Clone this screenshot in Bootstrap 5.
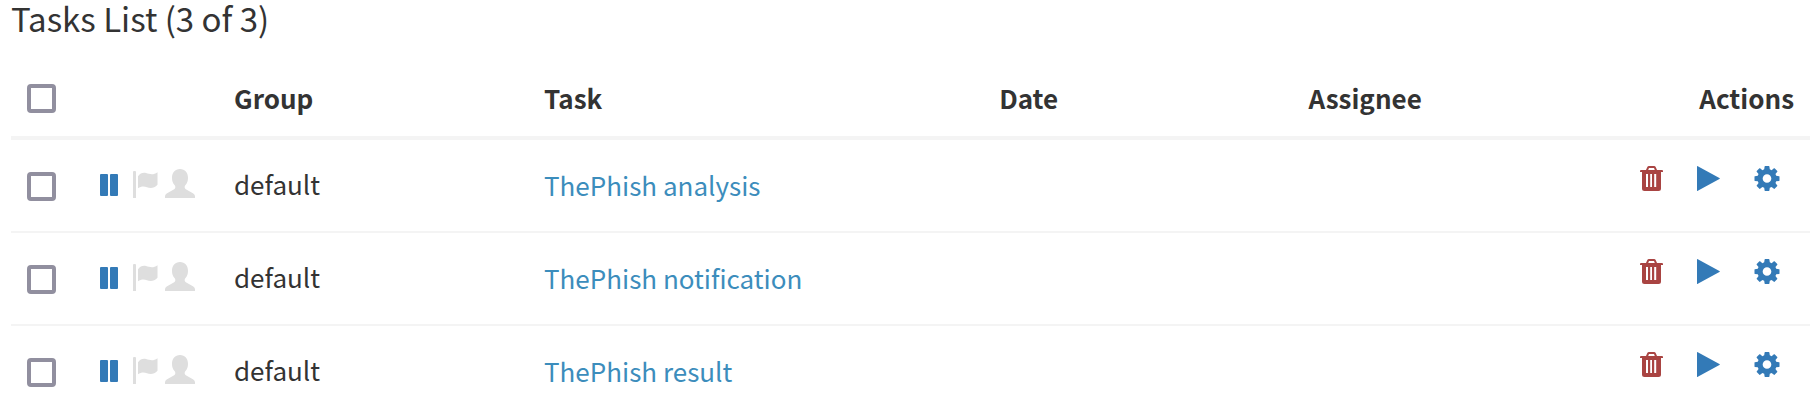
<!DOCTYPE html>
<html lang="en">
<head>
<meta charset="utf-8">
<meta name="viewport" content="width=device-width, initial-scale=1">
<title>Tasks List</title>
<link href="https://cdn.jsdelivr.net/npm/bootstrap@5.3.0/dist/css/bootstrap.min.css" rel="stylesheet">
<style>
  body { font-family: "Noto Sans CJK SC", "Source Sans Pro", sans-serif; font-size: 26px; line-height: 40px; color: #333; background: #fff; }
  .list-title { font-size: 33px; line-height: 36px; font-weight: 400; margin: 0 0 24px; }
  .task-panel { padding: 0 10px 0 11px; }
  .task-table { table-layout: fixed; border-collapse: separate; border-spacing: 0; color: #333; margin: 0; }
  .task-table > thead > tr > th { padding: 18px 16px; border-bottom: 4px solid #f4f4f4; font-weight: 700; vertical-align: top; }
  .task-table > tbody > tr > td { padding: 24px 16px 27px; border: 0; vertical-align: top; color: inherit; }
  .task-table > tbody > tr + tr > td { border-top: 2px solid #f4f4f4; }
  .task-table > tbody > tr:last-child > td { padding-bottom: 16px; }
  .col-check { width: 73px; }
  .col-state { width: 134px; }
  .col-group { width: 310px; }
  .col-task { width: 25.3%; }
  .col-date { width: 17.2%; }
  .task-check.form-check-input { display: block; width: 29px; height: 29px; margin: 8px 0 0; border: 4px solid #918f9f; border-radius: 4px; }
  th .task-check.form-check-input { margin-top: 6px; }
  .state-icons { margin-top: 5px; height: 29px; color: #dedede; }
  .state-icons svg, .task-actions svg { display: block; fill: currentColor; }
  .state-icons .icon-state { margin: 0 15px 2px 0; }
  .state-icons .icon-flag { margin-right: 7px; }
  .tone-blue { color: #337ab7; }
  .tone-red { color: #a94442; }
  .task-link { display: block; padding-top: 1px; margin-bottom: -1px; color: #3c8dbc; text-decoration: none; }
  .task-actions { gap: 34px; margin: 2px 14px 0 0; }
  .task-actions .btn { --bs-btn-padding-x: 0; --bs-btn-padding-y: 0; --bs-btn-border-width: 0; line-height: 1; border-radius: 0; }
</style>
</head>
<body>
<svg class="d-none" xmlns="http://www.w3.org/2000/svg">
  <symbol id="i-pause" viewBox="0 0 18 22"><rect width="8" height="22" rx="1"/><rect x="10" width="8" height="22" rx="1"/></symbol>
  <symbol id="i-flag" viewBox="0 0 25 27"><path d="M0 1q0-1 1-1h1q1 0 1 1v26H0zM5 5.200C7 2.500 10 1.300 13 2.100c4 1.200 7.500 2.200 11.500-.9v12.600c-3 3.400-7 3.900-10.500 2.500-3-1.200-6-1-9 .9z"/></symbol>
  <symbol id="i-user" viewBox="0 0 30 29"><path d="M15 0c5 0 8 3.500 8 9 0 3-1 5.500-2.500 7-.6.700-.8 1.200-.8 2.200 0 1.100.5 1.700 1.500 2.200l6.300 3.600c1.700 1 2.500 2 2.500 3.400V29H0v-1.600c0-1.400.8-2.400 2.500-3.400l6.300-3.600c1-.5 1.500-1.100 1.500-2.200 0-1-.2-1.500-.8-2.200C8 14.500 7 12 7 9c0-5.500 3-9 8-9z"/></symbol>
  <symbol id="i-trash" viewBox="0 0 23 25"><path fill-rule="evenodd" d="M6 4 7.200 1.200Q7.700 0 9 0h5q1.300 0 1.800 1.200L17 4h5q1 0 1 1v1h-2v16.500q0 2.500-2.500 2.500h-14Q2 25 2 22.500V6H0V5q0-1 1-1zm2.200 0h6.600l-.8-2H9zM6 8v13h2V8zm4.200 0v13H12V8zm4 0v13h2V8z"/></symbol>
  <symbol id="i-play" viewBox="0 0 23 25"><path d="M0 .6Q0-.3.800.2L22.400 12q.9.500 0 1L.800 24.800Q0 25.300 0 24.400z"/></symbol>
  <symbol id="i-cog" viewBox="0 0 26 26"><path fill-rule="evenodd" d="M10.500.5q0-.5.500-.5h4q.5 0 .5.500l.4 3 1.900.8 2.400-1.900q.4-.3.700 0l2.800 2.800q.3.300 0 .7l-1.900 2.400.8 1.900 3 .4q.4 0 .4.400v4q0 .5-.4.500l-3 .4-.8 1.900 1.900 2.400q.3.400 0 .7l-2.800 2.800q-.3.300-.7 0l-2.400-1.900-1.900.8-.4 3q0 .4-.5.400h-4q-.5 0-.5-.4l-.4-3-1.900-.8-2.400 1.900q-.4.300-.7 0l-2.800-2.800q-.3-.3 0-.7l1.900-2.400-.8-1.900-3-.4q-.4 0-.4-.5v-4q0-.4.400-.4l3-.4.800-1.900-1.900-2.400q-.3-.4 0-.7l2.800-2.800q.3-.3.700 0l2.400 1.900 1.900-.8zM13 8.500a4.500 4.500 0 1 0 0 9 4.500 4.500 0 0 0 0-9z"/></symbol>
</svg>
<main class="task-panel">
  <h1 class="list-title">Tasks List (3 of 3)</h1>
  <table class="table task-table w-100">
    <thead>
      <tr>
        <th class="col-check" scope="col"><input class="form-check-input task-check" type="checkbox" aria-label="Select all tasks"></th>
        <th class="col-state"></th>
        <th class="col-group" scope="col">Group</th>
        <th class="col-task" scope="col">Task</th>
        <th class="col-date" scope="col">Date</th>
        <th scope="col">Assignee</th>
        <th class="text-end" scope="col">Actions</th>
      </tr>
    </thead>
    <tbody>
      <tr>
        <td><input class="form-check-input task-check" type="checkbox" aria-label="Select ThePhish analysis"></td>
        <td><div class="state-icons d-flex align-items-end"><svg class="icon-state tone-blue" width="18" height="22"><use href="#i-pause"/></svg><svg class="icon-flag" width="25" height="27"><use href="#i-flag"/></svg><svg width="30" height="29"><use href="#i-user"/></svg></div></td>
        <td>default</td>
        <td><a class="task-link" href="#">ThePhish analysis</a></td>
        <td></td>
        <td></td>
        <td><div class="task-actions d-flex justify-content-end"><button class="btn" type="button" aria-label="Delete"><svg class="tone-red" width="23" height="25"><use href="#i-trash"/></svg></button><button class="btn" type="button" aria-label="Start"><svg class="tone-blue" width="23" height="25"><use href="#i-play"/></svg></button><button class="btn" type="button" aria-label="Run responders"><svg class="tone-blue" width="26" height="25"><use href="#i-cog"/></svg></button></div></td>
      </tr>
      <tr>
        <td><input class="form-check-input task-check" type="checkbox" aria-label="Select ThePhish notification"></td>
        <td><div class="state-icons d-flex align-items-end"><svg class="icon-state tone-blue" width="18" height="22"><use href="#i-pause"/></svg><svg class="icon-flag" width="25" height="27"><use href="#i-flag"/></svg><svg width="30" height="29"><use href="#i-user"/></svg></div></td>
        <td>default</td>
        <td><a class="task-link" href="#">ThePhish notification</a></td>
        <td></td>
        <td></td>
        <td><div class="task-actions d-flex justify-content-end"><button class="btn" type="button" aria-label="Delete"><svg class="tone-red" width="23" height="25"><use href="#i-trash"/></svg></button><button class="btn" type="button" aria-label="Start"><svg class="tone-blue" width="23" height="25"><use href="#i-play"/></svg></button><button class="btn" type="button" aria-label="Run responders"><svg class="tone-blue" width="26" height="25"><use href="#i-cog"/></svg></button></div></td>
      </tr>
      <tr>
        <td><input class="form-check-input task-check" type="checkbox" aria-label="Select ThePhish result"></td>
        <td><div class="state-icons d-flex align-items-end"><svg class="icon-state tone-blue" width="18" height="22"><use href="#i-pause"/></svg><svg class="icon-flag" width="25" height="27"><use href="#i-flag"/></svg><svg width="30" height="29"><use href="#i-user"/></svg></div></td>
        <td>default</td>
        <td><a class="task-link" href="#">ThePhish result</a></td>
        <td></td>
        <td></td>
        <td><div class="task-actions d-flex justify-content-end"><button class="btn" type="button" aria-label="Delete"><svg class="tone-red" width="23" height="25"><use href="#i-trash"/></svg></button><button class="btn" type="button" aria-label="Start"><svg class="tone-blue" width="23" height="25"><use href="#i-play"/></svg></button><button class="btn" type="button" aria-label="Run responders"><svg class="tone-blue" width="26" height="25"><use href="#i-cog"/></svg></button></div></td>
      </tr>
    </tbody>
  </table>
</main>
<script src="https://cdn.jsdelivr.net/npm/bootstrap@5.3.0/dist/js/bootstrap.bundle.min.js"></script>
</body>
</html>
